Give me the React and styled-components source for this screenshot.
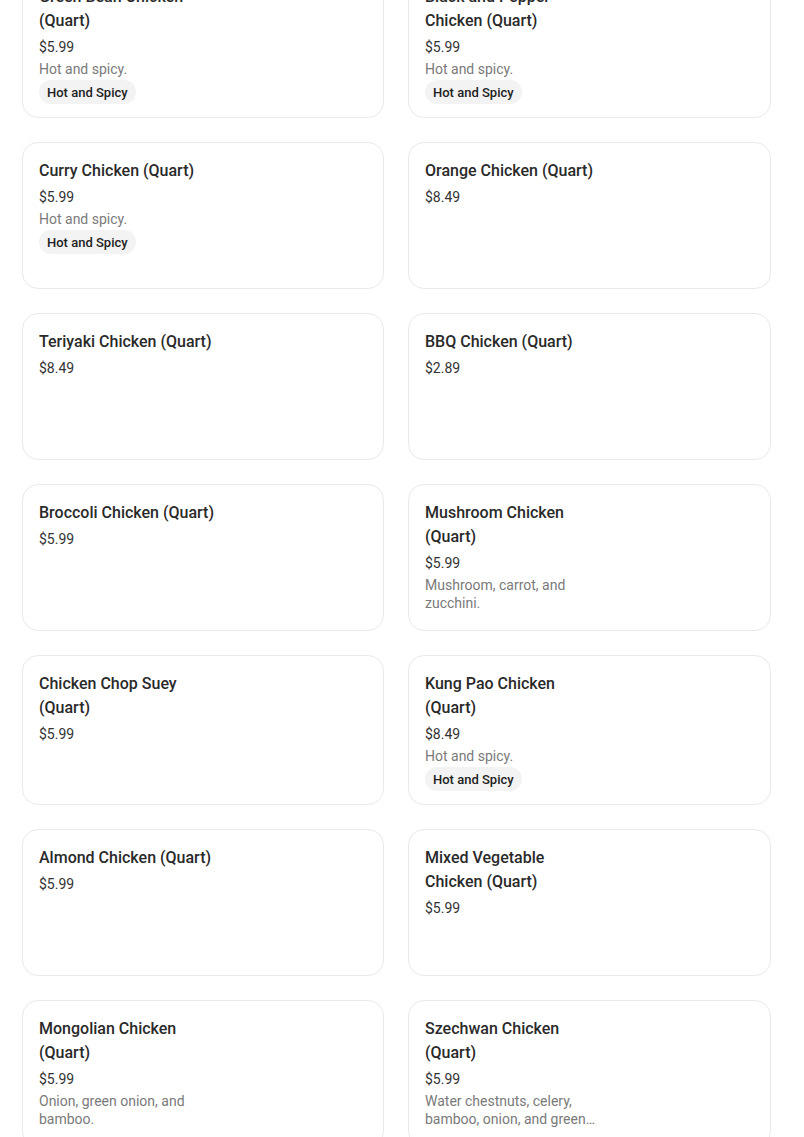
import React from "react";
import styled, { createGlobalStyle } from "styled-components";

const GlobalStyle = createGlobalStyle`
  html, body {
    margin: 0;
    padding: 0;
    background: #fff;
    overflow: hidden;
  }
  body {
    font-family: Roboto, "Noto Sans", "Liberation Sans", sans-serif;
    -webkit-font-smoothing: antialiased;
  }
`;

/* scrolled list: first row is partly above the fold */
const Grid = styled.div`
  display: grid;
  grid-template-columns: 362px 363px;
  column-gap: 24px;
  row-gap: 24px;
  align-items: stretch;
  margin: -32px 0 0 22px;
`;

const Card = styled.div`
  box-sizing: border-box;
  min-height: 147px;
  border: 1px solid #e9e9e9;
  border-radius: 16px;
  padding: 16px 16px 13px 16px;
  background: #fff;
`;

const Info = styled.div`
  width: 178px;
  display: flex;
  flex-direction: column;
  align-items: flex-start;
`;

const Title = styled.div`
  font-size: 16px;
  font-weight: 500;
  line-height: 24px;
  color: #2a2a2a;
`;

const Price = styled.div`
  margin-top: 4px;
  font-size: 14px;
  line-height: 20px;
  color: #333;
`;

const Desc = styled.div`
  margin-top: 3px;
  font-size: 14px;
  line-height: 18px;
  color: #7a7a7a;
  display: -webkit-box;
  -webkit-line-clamp: 2;
  -webkit-box-orient: vertical;
  overflow: hidden;
`;

const Badge = styled.span`
  margin-top: 2px;
  display: inline-flex;
  align-items: center;
  height: 24px;
  padding: 0 8px;
  border-radius: 12px;
  background: #f3f3f3;
  font-size: 13px;
  font-weight: 500;
  color: #222;
`;

const items = [
  { name: "Green Bean Chicken (Quart)", price: "$5.99", desc: "Hot and spicy.", tag: "Hot and Spicy" },
  { name: "Black and Pepper Chicken (Quart)", price: "$5.99", desc: "Hot and spicy.", tag: "Hot and Spicy" },
  { name: "Curry Chicken (Quart)", price: "$5.99", desc: "Hot and spicy.", tag: "Hot and Spicy" },
  { name: "Orange Chicken (Quart)", price: "$8.49" },
  { name: "Teriyaki Chicken (Quart)", price: "$8.49" },
  { name: "BBQ Chicken (Quart)", price: "$2.89" },
  { name: "Broccoli Chicken (Quart)", price: "$5.99" },
  { name: "Mushroom Chicken (Quart)", price: "$5.99", desc: "Mushroom, carrot, and zucchini." },
  { name: "Chicken Chop Suey (Quart)", price: "$5.99" },
  { name: "Kung Pao Chicken (Quart)", price: "$8.49", desc: "Hot and spicy.", tag: "Hot and Spicy" },
  { name: "Almond Chicken (Quart)", price: "$5.99" },
  { name: "Mixed Vegetable Chicken (Quart)", price: "$5.99" },
  { name: "Mongolian Chicken (Quart)", price: "$5.99", desc: "Onion, green onion, and bamboo." },
  { name: "Szechwan Chicken (Quart)", price: "$5.99", desc: "Water chestnuts, celery, bamboo, onion, and green peppers." },
];

function MenuItem({ item }) {
  return (
    <Card>
      <Info>
        <Title>{item.name}</Title>
        <Price>{item.price}</Price>
        {item.desc && <Desc>{item.desc}</Desc>}
        {item.tag && <Badge>{item.tag}</Badge>}
      </Info>
    </Card>
  );
}

export default function App() {
  return (
    <>
      <GlobalStyle />
      <Grid>
        {items.map((it) => (
          <MenuItem key={it.name} item={it} />
        ))}
      </Grid>
    </>
  );
}
